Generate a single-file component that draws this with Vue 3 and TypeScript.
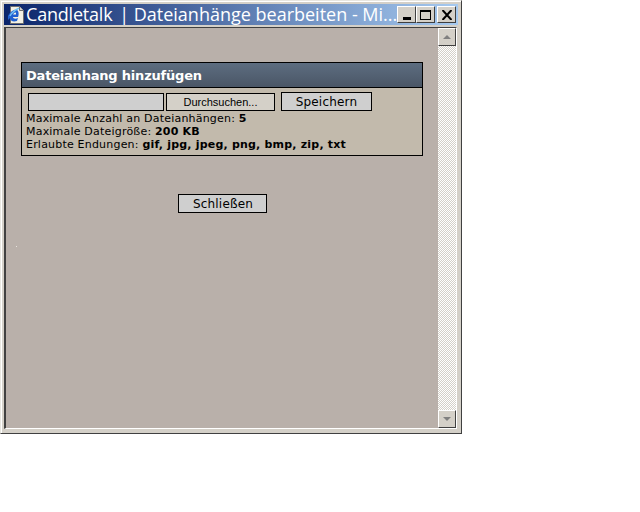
<script setup lang="ts">
const limits = [
  { label: 'Maximale Anzahl an Dateianhängen:', value: '5' },
  { label: 'Maximale Dateigröße:', value: '200 KB' },
  { label: 'Erlaubte Endungen:', value: 'gif, jpg, jpeg, png, bmp, zip, txt' },
]
</script>

<template>
  <div class="window">
    <div class="titlebar">
      <svg class="appicon" width="17" height="18" viewBox="0 0 17 18">
        <path d="M2.500 .5H11.500L15.500 4.500V17.500H2.500Z" fill="#f4f1e4" stroke="#6f6f6f" />
        <path d="M11.500 .5V4.500H15.500" fill="#cfcfcf" stroke="#6f6f6f" />
        <path d="M0 10C2 6 6 3 9 4C11 5 11 9 10 11H5C5 13 8 13 10 12L9 15C5 16 2 15 2 12L0 14Z" fill="#1f5fd0" />
        <path d="M2 10C4 6 8 4 11 2" fill="none" stroke="#6fc0f5" stroke-width="1.500" />
        <path d="M5 8.500H8V7C7 6 6 7 5 8.500Z" fill="#f4f1e4" />
      </svg>
      <span class="title"><span class="site">Candletalk</span> | Dateianhänge bearbeiten - Mi...</span>
      <div class="controls">
        <button class="ctl" type="button"><i class="min"></i></button>
        <button class="ctl" type="button"><i class="max"></i></button>
        <button class="ctl close" type="button">
          <svg width="10" height="10" viewBox="0 0 10 10"><path d="M.5 0L9.500 10M9.500 0L.5 10" stroke="#000" stroke-width="2" /></svg>
        </button>
      </div>
    </div>
    <div class="client">
      <main class="page">
        <section class="panel">
          <h1 class="head">Dateianhang hinzufügen</h1>
          <div class="body">
            <div class="row">
              <span class="fileinput"></span>
              <button class="browse" type="button">Durchsuchen...</button>
              <button class="btn save" type="button">Speichern</button>
            </div>
            <p v-for="l in limits" :key="l.label" class="line">{{ l.label }} <b>{{ l.value }}</b></p>
          </div>
        </section>
        <button class="btn closebtn" type="button">Schließen</button>
        <i class="speck"></i>
      </main>
      <aside class="scrollbar">
        <span class="arrow"><i class="up"></i></span>
        <span class="track"></span>
        <span class="arrow"><i class="down"></i></span>
      </aside>
    </div>
  </div>
</template>

<style>
html, body { background: #fff; margin: 0; }
</style>

<style scoped>
.window {
  box-sizing: border-box;
  width: 462px;
  height: 434px;
  padding: 3px 3px 4px;
  background: #d4d0c8;
  border: 1px solid;
  border-color: #e8e6e0 #404040 #404040 #e8e6e0;
  box-shadow: inset 1px 1px 0 #fff;
  display: flex;
  flex-direction: column;
  font-family: "DejaVu Sans", Verdana, sans-serif;
  color: #000;
}
.titlebar {
  height: 21px;
  flex: none;
  display: flex;
  align-items: center;
  background: linear-gradient(90deg, #0a246a, #a6caf0);
  color: #fff;
  padding-left: 4px;
}
.appicon { flex: none; margin-right: 1px; }
.title {
  flex: 1;
  min-width: 0;
  white-space: nowrap;
  font: 400 18px "Open Sans", sans-serif;
  line-height: 21px;
}
.site { letter-spacing: -.2px; margin-right: 2px; }
.controls { display: flex; flex: none; padding-right: 2px; }
.ctl {
  box-sizing: border-box;
  width: 19px;
  height: 17px;
  padding: 0;
  background: #d4d0c8;
  border: 1px solid;
  border-color: #fff #404040 #404040 #fff;
  display: flex;
  align-items: center;
  justify-content: center;
}
.close { margin-left: 2px; }
.min { width: 8px; height: 3px; background: #000; margin-top: 8px; }
.max { box-sizing: border-box; width: 11px; height: 10px; border: 1px solid #000; border-top-width: 2px; }
.client {
  flex: 1;
  min-height: 0;
  margin: 2px 1px 0 0;
  display: flex;
  border: 1px solid;
  border-left: 2px solid #404040;
  border-color: #404040 #fff #fff #404040;
}
.page {
  flex: 1;
  min-width: 0;
  background: #b9b0aa;
  padding: 34px 14px 0 15px;
  position: relative;
}
.panel {
  box-sizing: border-box;
  width: 402px;
  border: 1px solid #000;
  background: #c2baac;
}
.head {
  margin: 0;
  height: 25px;
  box-sizing: border-box;
  border-bottom: 1px solid #000;
  background: linear-gradient(#5d6d80, #4a5666);
  color: #fff;
  font: 700 13px/25px "DejaVu Sans", sans-serif;
  letter-spacing: -.2px;
  padding-left: 4px;
}
.body { padding: 4px 4px 0; height: 67px; box-sizing: border-box; }
.row { display: flex; align-items: flex-start; height: 19px; margin: 0 0 1px 2px; }
.fileinput {
  box-sizing: border-box;
  width: 136px;
  height: 18px;
  margin-top: 1px;
  background: #cfcfcf;
  border: 1px solid #000;
}
.browse {
  box-sizing: border-box;
  width: 109px;
  height: 18px;
  margin: 1px 0 0 2px;
  padding: 0;
  background: #d4d0c8;
  border: 1px solid #000;
  font: 11px "Liberation Sans", sans-serif;
  color: #000;
}
.btn {
  box-sizing: border-box;
  padding: 0;
  height: 19px;
  background: #cfcfcf;
  border: 1px solid #000;
  font: 12px "DejaVu Sans", sans-serif;
  letter-spacing: .2px;
  color: #000;
}
.save { width: 91px; margin-left: 6px; }
.line { margin: 0; font-size: 11px; line-height: 13px; white-space: nowrap; letter-spacing: .2px; }
.closebtn { display: block; width: 89px; margin: 38px 0 0 157px; padding-left: 1px; }
.speck {
  position: absolute;
  left: 10px;
  top: 218px;
  width: 1px;
  height: 1px;
  background: #e8e4de;
}
.scrollbar {
  flex: none;
  width: 18px;
  display: flex;
  flex-direction: column;
}
.arrow {
  box-sizing: border-box;
  height: 18px;
  flex: none;
  background: #d4d0c8;
  border: 1px solid;
  border-color: #fff #404040 #404040 #fff;
  display: flex;
  align-items: center;
  justify-content: center;
}
.track {
  flex: 1;
  background: repeating-conic-gradient(#d4d0c8 0 25%, #fff 0 50%) 0 0 / 2px 2px;
}
.up, .down { width: 0; height: 0; border-left: 4px solid transparent; border-right: 4px solid transparent; }
.up { border-bottom: 4px solid #808080; }
.down { border-top: 4px solid #808080; }
</style>
